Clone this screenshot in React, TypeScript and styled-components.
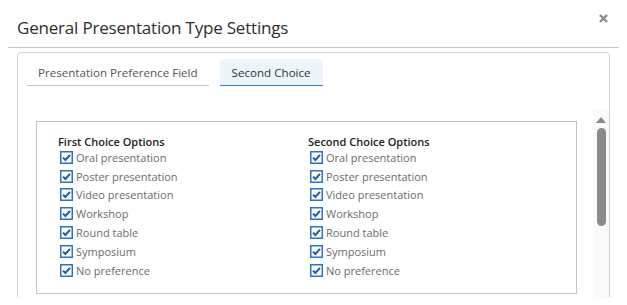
import React from "react";
import styled, { createGlobalStyle } from "styled-components";

const options = [
  "Oral presentation",
  "Poster presentation",
  "Video presentation",
  "Workshop",
  "Round table",
  "Symposium",
  "No preference",
];

const GlobalStyle = createGlobalStyle`
  body {
    margin: 8px;
    background: #ffffff;
    font-family: "Open Sans", "DejaVu Sans", sans-serif;
  }
`;

const Modal = styled.div`
  width: 612px;
  height: 289px;
  background: #fff;
  box-shadow: 0 0 8px rgba(0, 0, 0, 0.35);
  overflow: hidden;
`;

const Header = styled.div`
  height: 40px;
  box-sizing: border-box;
  border-bottom: 1px solid #c8c8c8;
  display: flex;
  align-items: center;
  justify-content: space-between;
  padding: 0 11px 0 9px;
`;

const Title = styled.h1`
  margin: 0;
  font-size: 17px;
  font-weight: 500;
  letter-spacing: -0.2px;
  color: #2e2e2e;
`;

const Close = styled.button`
  border: none;
  background: none;
  padding: 0;
  margin-top: -18px;
  width: 10px;
  height: 10px;
  display: flex;
  cursor: pointer;
`;

const Body = styled.div`
  padding: 4px 10px 0 9px;
`;

const Panel = styled.div`
  border: 1px solid #d4d4d4;
  border-radius: 4px;
  height: 260px;
  box-sizing: border-box;
  display: flex;
  flex-direction: column;
`;

const TabRow = styled.div`
  display: flex;
  gap: 11px;
  padding: 6px 0 0 9px;
`;

const Tab = styled.div<{ active?: boolean }>`
  height: 27px;
  box-sizing: border-box;
  display: flex;
  align-items: center;
  white-space: nowrap;
  padding: 0 ${(p) => (p.active ? "12px" : "11px")};
  font-size: 11.6px;
  font-weight: 500;
  color: ${(p) => (p.active ? "#333" : "#555")};
  background: ${(p) => (p.active ? "#eef4fb" : "transparent")};
  border-radius: 4px 4px 0 0;
  border-bottom: 1px solid ${(p) => (p.active ? "#2f7fcf" : "#c4c4c4")};
`;

const ScrollArea = styled.div`
  flex: 1;
  display: flex;
  margin-top: 24px;
  padding-left: 18px;
`;

const Content = styled.div`
  flex: 1;
  padding-top: 11px;
  padding-right: 16px;
`;

const OptionsBox = styled.div`
  border: 1px solid #c4c4c4;
  height: 173px;
  box-sizing: border-box;
  display: grid;
  grid-template-columns: 250px 1fr;
  padding: 13px 0 0 21px;
`;

const Column = styled.div`
  display: flex;
  flex-direction: column;
`;

const ColumnTitle = styled.div`
  font-size: 11px;
  font-weight: 600;
  color: #222;
  line-height: 13px;
`;

const Option = styled.label`
  display: flex;
  align-items: center;
  gap: 3px;
  height: 18.8px;
  padding-left: 2px;
  font-size: 11px;
  color: #6b6b6b;
`;

const Track = styled.div`
  width: 16px;
  background: #fafafa;
  display: flex;
  flex-direction: column;
  align-items: center;
  padding-top: 7px;
`;

const Arrow = styled.div`
  width: 0;
  height: 0;
  border-left: 5px solid transparent;
  border-right: 5px solid transparent;
  border-bottom: 6px solid #8a8a8a;
`;

const Thumb = styled.div`
  margin-top: 5px;
  width: 9px;
  height: 98px;
  border-radius: 5px;
  background: #8a8a8a;
`;

function Check() {
  return (
    <svg width="13" height="13" viewBox="0 0 13 13">
      <rect x="0.75" y="0.75" width="11.5" height="11.5" fill="#fff" stroke="#2a74c2" strokeWidth="1.5" />
      <path d="M3 6.6 L5.4 9 L10 3.8" fill="none" stroke="#1b5ea6" strokeWidth="2" />
    </svg>
  );
}

function OptionColumn({ title }: { title: string }) {
  return (
    <Column>
      <ColumnTitle>{title}</ColumnTitle>
      {options.map((o) => (
        <Option key={o}>
          <Check />
          {o}
        </Option>
      ))}
    </Column>
  );
}

export default function App() {
  return (
    <>
      <GlobalStyle />
      <Modal>
        <Header>
          <Title>General Presentation Type Settings</Title>
          <Close aria-label="close">
            <svg width="9" height="9" viewBox="0 0 9 9">
              <path d="M1 1 L8 8 M8 1 L1 8" stroke="#8c8c8c" strokeWidth="2.4" />
            </svg>
          </Close>
        </Header>
        <Body>
          <Panel>
            <TabRow>
              <Tab>Presentation Preference Field</Tab>
              <Tab active>Second Choice</Tab>
            </TabRow>
            <ScrollArea>
              <Content>
                <OptionsBox>
                  <OptionColumn title="First Choice Options" />
                  <OptionColumn title="Second Choice Options" />
                </OptionsBox>
              </Content>
              <Track>
                <Arrow />
                <Thumb />
              </Track>
            </ScrollArea>
          </Panel>
        </Body>
      </Modal>
    </>
  );
}
